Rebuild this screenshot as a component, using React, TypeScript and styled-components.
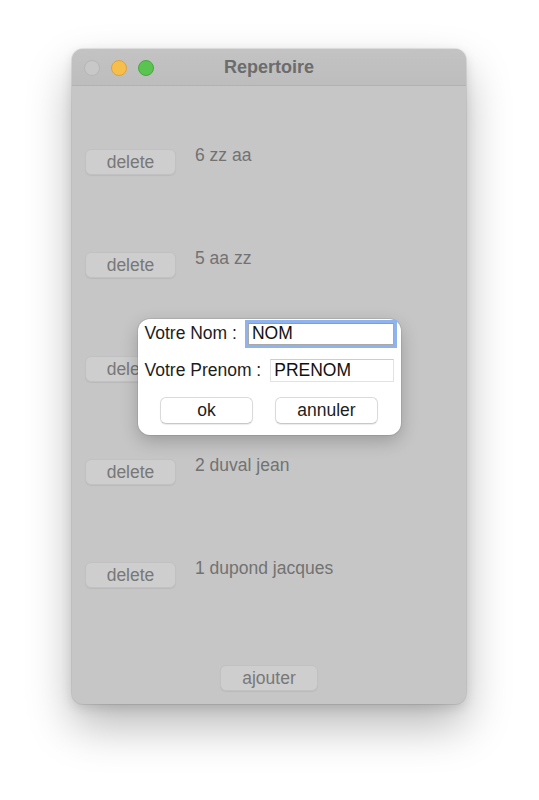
import { FC } from "react";
import styled, { createGlobalStyle } from "styled-components";

const GlobalStyle = createGlobalStyle`
    html, body {
        margin: 0;
        padding: 0;
        background: #ffffff;
    }
    body {
        font-family: "Liberation Sans", Arial, sans-serif;
    }
`;

const Page = styled.div`
    display: flex;
    justify-content: center;
    padding: 49px 1px 0 0;
    height: 800px;
    box-sizing: border-box;
`;

const Window = styled.div`
    position: relative;
    width: 394px;
    height: 655px;
    border-radius: 11px;
    background: #c6c6c6;
    box-shadow: 0 0 0 1px rgba(0, 0, 0, 0.08), 0 22px 45px rgba(0, 0, 0, 0.28), 0 4px 12px rgba(0, 0, 0, 0.12);
    display: flex;
    flex-direction: column;
    overflow: hidden;
`;

const TitleBar = styled.div`
    position: relative;
    height: 36px;
    flex: none;
    display: flex;
    align-items: center;
    justify-content: center;
    background: linear-gradient(#c3c3c3, #bdbdbd);
    border-bottom: 1px solid #b2b2b2;
`;

const Lights = styled.div`
    position: absolute;
    left: 12px;
    top: 11px;
    display: flex;
    gap: 11px;
`;

const Light = styled.span<{ $fill: string; $edge: string }>`
    width: 14px;
    height: 14px;
    border-radius: 50%;
    background: ${({ $fill }) => $fill};
    border: 1px solid ${({ $edge }) => $edge};
`;

const Title = styled.div`
    font-size: 18px;
    font-weight: 700;
    color: #6c6c6c;
`;

const Content = styled.div`
    flex: 1;
    display: flex;
    flex-direction: column;
    padding: 63px 0 0 13px;
`;

const Row = styled.div`
    height: 103.3px;
    flex: none;
    display: flex;
    align-items: flex-start;
    gap: 19px;
`;

const GreyButton = styled.button<{ $w: number }>`
    width: ${({ $w }) => $w}px;
    height: 26px;
    padding: 0;
    border-radius: 6px;
    border: 1px solid #c1c1c1;
    background: #cecece;
    box-shadow: 0 1px 1px rgba(0, 0, 0, 0.06);
    font-family: "Liberation Sans", Arial, sans-serif;
    font-size: 17.5px;
    color: #787878;
    line-height: 24px;
`;

const Entry = styled.span`
    margin-top: -4px;
    font-size: 17.5px;
    line-height: 20px;
    color: #727272;
`;

const Footer = styled.div`
    display: flex;
    justify-content: center;
    margin-left: -13px;
`;

const Overlay = styled.div`
    position: absolute;
    inset: 0;
    display: flex;
    align-items: center;
    justify-content: center;
`;

const Dialog = styled.div`
    width: 263px;
    height: 116px;
    box-sizing: border-box;
    background: #ffffff;
    border-radius: 12px;
    box-shadow: 0 0 0 1px rgba(0, 0, 0, 0.08), 0 6px 18px rgba(0, 0, 0, 0.22);
    padding: 4px 7px 0 7px;
    display: flex;
    flex-direction: column;
`;

const FieldRow = styled.div<{ $gap: number; $mt: number }>`
    display: flex;
    align-items: center;
    gap: ${({ $gap }) => $gap}px;
    margin-top: ${({ $mt }) => $mt}px;
`;

const FieldLabel = styled.label`
    font-size: 17.5px;
    color: #1d1d1d;
    white-space: nowrap;
`;

const Field = styled.input<{ $focus?: boolean; $h: number }>`
    flex: 1;
    min-width: 0;
    height: ${({ $h }) => $h}px;
    box-sizing: border-box;
    padding: 0 3px;
    font-family: "Liberation Sans", Arial, sans-serif;
    font-size: 17.5px;
    color: #111;
    background: #fff;
    border: 1px solid ${({ $focus }) => ($focus ? "#a9a9a9" : "#e2e2e2")};
    border-top-color: ${({ $focus }) => ($focus ? "#9a9a9a" : "#cdcdcd")};
    outline: none;
    box-shadow: ${({ $focus }) => ($focus ? "0 0 0 3px #8fb3ee" : "none")};
`;

const ButtonRow = styled.div`
    display: flex;
    justify-content: center;
    gap: 22px;
    margin-top: 15px;
`;

const WhiteButton = styled.button<{ $w: number }>`
    width: ${({ $w }) => $w}px;
    height: 27px;
    padding: 0;
    border-radius: 6px;
    border: 1px solid #dadada;
    border-bottom-color: #c8c8c8;
    background: #ffffff;
    box-shadow: 0 1px 1px rgba(0, 0, 0, 0.08);
    font-family: "Liberation Sans", Arial, sans-serif;
    font-size: 17.5px;
    color: #1d1d1d;
`;

const entries = ["6 zz aa", "5 aa zz", "", "2 duval jean", "1 dupond jacques"];

const App: FC = () => {
    return (
        <>
            <GlobalStyle />
            <Page>
                <Window>
                    <TitleBar>
                        <Lights>
                            <Light $fill="#c8c8c8" $edge="#b6b6b6" />
                            <Light $fill="#f6bf4c" $edge="#dea33a" />
                            <Light $fill="#5bc450" $edge="#46a93d" />
                        </Lights>
                        <Title>Repertoire</Title>
                    </TitleBar>
                    <Content>
                        {entries.map((entry, i) => (
                            <Row key={i}>
                                <GreyButton $w={91}>delete</GreyButton>
                                <Entry>{entry}</Entry>
                            </Row>
                        ))}
                        <Footer>
                            <GreyButton $w={98}>ajouter</GreyButton>
                        </Footer>
                    </Content>
                    <Overlay>
                        <Dialog>
                            <FieldRow $gap={11} $mt={0}>
                                <FieldLabel>Votre Nom :</FieldLabel>
                                <Field $focus $h={22} defaultValue="NOM" />
                            </FieldRow>
                            <FieldRow $gap={9} $mt={14}>
                                <FieldLabel>Votre Prenom :</FieldLabel>
                                <Field $h={23} defaultValue="PRENOM" />
                            </FieldRow>
                            <ButtonRow>
                                <WhiteButton $w={93}>ok</WhiteButton>
                                <WhiteButton $w={103}>annuler</WhiteButton>
                            </ButtonRow>
                        </Dialog>
                    </Overlay>
                </Window>
            </Page>
        </>
    );
};

export default App;
